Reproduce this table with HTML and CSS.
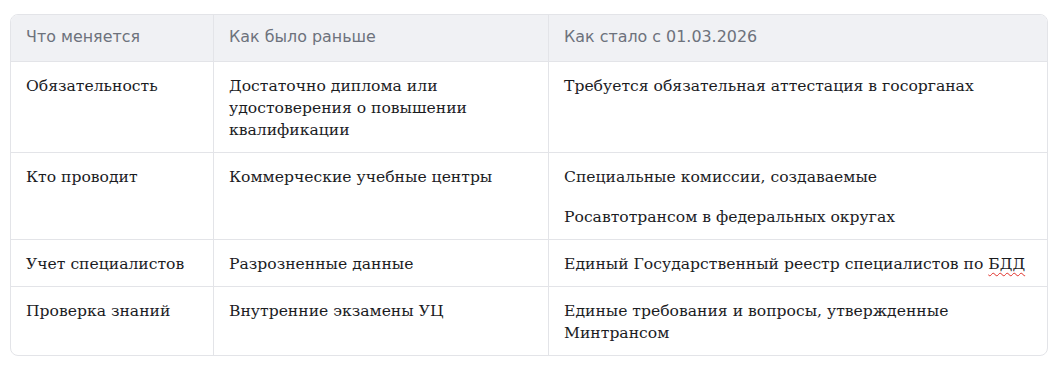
FILE: index.html
```html
<!DOCTYPE html>
<html lang="ru">
<head>
<meta charset="utf-8">
<link rel="stylesheet" href="styles.css">
</head>
<body>
<div class="wrap">
<table class="tbl">
  <thead>
    <tr>
      <th class="c1">Что меняется</th>
      <th class="c2">Как было раньше</th>
      <th class="c3">Как стало с 01.03.2026</th>
    </tr>
  </thead>
  <tbody>
    <tr>
      <td>Обязательность</td>
      <td>Достаточно диплома или удостоверения о повышении квалификации</td>
      <td>Требуется обязательная аттестация в госорганах</td>
    </tr>
    <tr>
      <td>Кто проводит</td>
      <td>Коммерческие учебные центры</td>
      <td><p>Специальные комиссии, создаваемые</p><p>Росавтотрансом в федеральных округах</p></td>
    </tr>
    <tr>
      <td>Учет специалистов</td>
      <td>Разрозненные данные</td>
      <td>Единый Государственный реестр специалистов по <span class="spell">БДД</span></td>
    </tr>
    <tr>
      <td>Проверка знаний</td>
      <td>Внутренние экзамены УЦ</td>
      <td>Единые требования и вопросы, утвержденные Минтрансом</td>
    </tr>
  </tbody>
</table>
</div>
</body>
</html>
```
FILE: styles.css
```css
html, body { margin: 0; padding: 0; background: #fff; }
.wrap { padding: 14px 10px 0 10px; }
.tbl {
  width: 1038px;
  border-collapse: separate;
  border-spacing: 0;
  border: 1px solid #e3e4e8;
  border-radius: 8px;
  overflow: hidden;
}
.tbl th, .tbl td {
  text-align: left;
  vertical-align: top;
  padding: 12px 15px;
  line-height: 22px;
  border-bottom: 1px solid #e3e4e8;
  border-right: 1px solid #e3e4e8;
}
.tbl th:last-child, .tbl td:last-child { border-right: none; }
.tbl tbody tr:last-child td { border-bottom: none; }
.tbl th {
  background: #f0f1f4;
  color: #6d727c;
  font-family: "DejaVu Sans", "Open Sans", sans-serif;
  font-weight: 400;
  font-size: 15.9px;
  padding-top: 11px;
  padding-bottom: 13px;
}
.tbl td {
  color: #1b1c1f;
  font-family: "DejaVu Serif", serif;
  font-size: 15.6px;
  padding-top: 13px;
  padding-bottom: 11px;
}
.c1 { width: 172px; }
.c2 { width: 304px; }
.tbl td p { margin: 0 0 18px 0; }
.tbl td p:last-child { margin-bottom: 0; }
.spell { text-decoration: underline wavy #e0302a; text-decoration-thickness: 1px; text-underline-offset: 3px; }
```
